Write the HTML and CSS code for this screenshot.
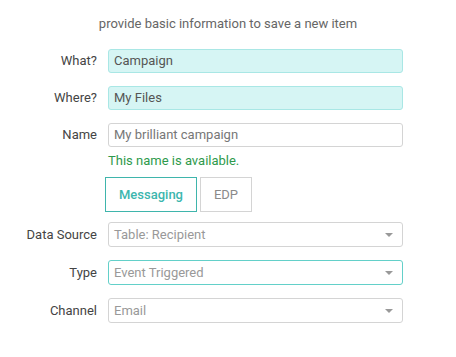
FILE: index.html
```html
<!DOCTYPE html>
<html lang="en">
<head>
    <meta charset="UTF-8">
    <meta name="viewport" content="width=device-width, initial-scale=1.0">
    <title>Save new item</title>
    <link rel="stylesheet" href="styles.css">
</head>
<body>
    <div class="container">
        <p class="intro">provide basic information to save a new item</p>
        <form class="item-form">
            <div class="row">
                <label class="row-label">What?</label>
                <div class="field field-picked">Campaign</div>
            </div>
            <div class="row">
                <label class="row-label">Where?</label>
                <div class="field field-picked">My Files</div>
            </div>
            <div class="row row-name">
                <label class="row-label">Name</label>
                <div class="field field-text">My brilliant campaign</div>
            </div>
            <div class="row row-note">
                <span></span>
                <div class="note-ok">This name is available.</div>
            </div>
            <div class="row row-tabs">
                <span></span>
                <div class="tabs">
                    <button type="button" class="tab tab-active">Messaging</button>
                    <button type="button" class="tab">EDP</button>
                </div>
            </div>
            <div class="row row-select">
                <label class="row-label">Data Source</label>
                <div class="field field-select">Table: Recipient<span class="caret"></span></div>
            </div>
            <div class="row row-select">
                <label class="row-label">Type</label>
                <div class="field field-select field-focus">Event Triggered<span class="caret"></span></div>
            </div>
            <div class="row row-select">
                <label class="row-label">Channel</label>
                <div class="field field-select">Email<span class="caret"></span></div>
            </div>
        </form>
    </div>
</body>
</html>
```

FILE: styles.css
```css
body {
    font-family: Roboto, "Liberation Sans", sans-serif;
    font-size: 13px;
    line-height: 16px;
    color: #333;
    margin: 0;
}
.container {
    width: 456px;
    padding-top: 16px;
}
.intro {
    margin: 0 0 17px;
    text-align: center;
    color: #666;
}
.row {
    display: grid;
    grid-template-columns: 97px 295px;
    column-gap: 11px;
    align-items: center;
    margin-bottom: 13px;
}
.row-label {
    text-align: right;
    color: #444;
}
.field {
    box-sizing: border-box;
    height: 24px;
    padding: 3px 5px 0;
    border: 1px solid #d4d4d4;
    border-radius: 3px;
    background: #fff;
}
.field-picked {
    background-color: #d6f5f4;
    border-color: #a9e7e5;
    color: #555;
}
.field-text {
    color: #777;
}
.row-name {
    margin-bottom: 6px;
}
.row-note {
    margin-bottom: 8px;
}
.note-ok {
    color: #2e9a4c;
}
.row-tabs {
    margin-bottom: 10px;
}
.tabs {
    display: flex;
    gap: 3px;
    margin-left: -3px;
}
.tab {
    height: 35px;
    padding: 0;
    border: 1px solid #d4d4d4;
    background: #fff;
    font-family: inherit;
    font-size: 13px;
    color: #8a8a8a;
    width: 52px;
}
.tab-active {
    width: 92px;
    border-color: #3fb5ac;
    color: #3cb6ae;
    font-weight: 500;
}
.field-select {
    position: relative;
    height: 25px;
    padding-top: 4px;
    color: #999;
}
.field-focus {
    border-color: #63d0c9;
}
.caret {
    position: absolute;
    right: 9px;
    top: 10px;
    border-left: 4px solid transparent;
    border-right: 4px solid transparent;
    border-top: 4px solid #999;
}
```
